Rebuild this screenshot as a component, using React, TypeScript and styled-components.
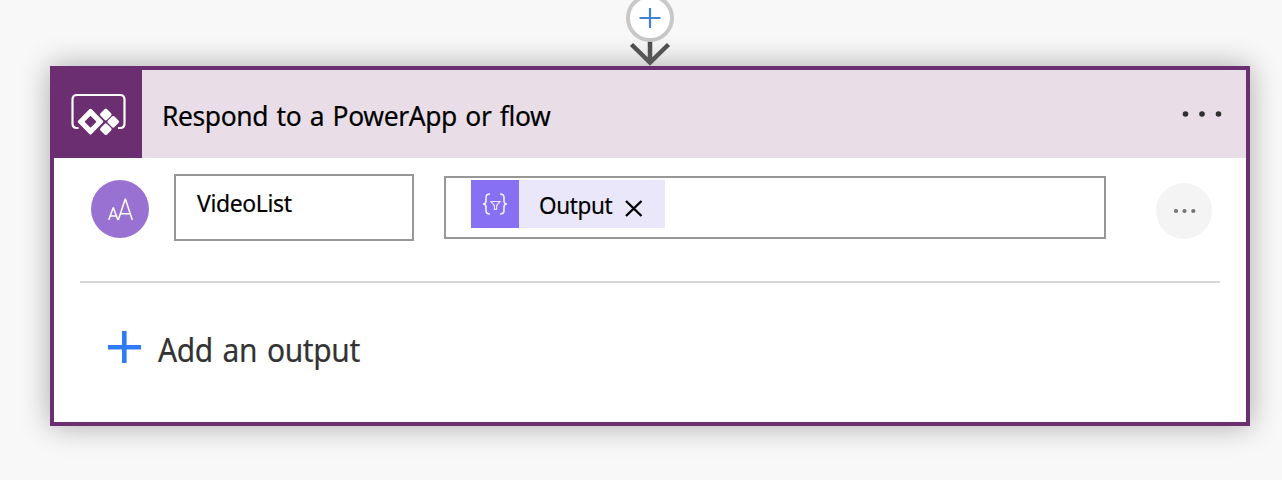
import React from "react";
import styled, { createGlobalStyle } from "styled-components";

const GlobalStyle = createGlobalStyle`
  * { box-sizing: border-box; }
  body { margin: 0; background: #f8f8f8; overflow: hidden; }
`;

const Page = styled.main`
  width: 1282px;
  height: 480px;
  padding: 0 32px 0 50px;
  overflow: hidden;
  background: #f8f8f8;
  font-family: "Noto Sans", "Open Sans", sans-serif;
`;

const Connector = styled.div`
  display: flex;
  justify-content: center;
  height: 66px;
  svg { display: block; }
`;

const Card = styled.section`
  position: relative;
  height: 360px;
  border: 4px solid #6b2e70;
  background: #fff;
  box-shadow: 0 0 28px rgba(0, 0, 0, 0.32);
`;

const Header = styled.header`
  display: flex;
  align-items: center;
  height: 88px;
  padding-right: 22px;
  background: #e9dee8;
`;

const Logo = styled.div`
  width: 88px;
  height: 88px;
  flex: none;
  background: #6b2e70;
  svg { display: block; }
`;

const Label = styled.span<{ $size: number; $condense: number; $gap?: number; $color?: string }>`
  display: inline-block;
  font-size: ${(p) => p.$size}px;
  letter-spacing: -0.4px;
  word-spacing: ${(p) => p.$gap ?? 0}px;
  color: ${(p) => p.$color ?? "#000"};
  -webkit-text-stroke: 0.2px;
  line-height: 36px;
  white-space: pre;
  transform: scaleX(${(p) => p.$condense});
  transform-origin: left;
`;

const Title = styled.h1`
  flex: 1;
  margin: 14px 0 0 20px;
  font-weight: 400;
  line-height: 36px;
  font-size: 0;
`;

const PlainButton = styled.button`
  padding: 0;
  border: 0;
  background: none;
  font: inherit;
  svg { display: block; }
`;

const OutputRow = styled.div`
  display: flex;
  align-items: flex-start;
  height: 123px;
  margin: 0 26px;
  padding: 16px 8px 0 11px;
`;

const TypeBadge = styled.div`
  width: 58px;
  height: 58px;
  margin-top: 6px;
  border-radius: 50%;
  background: #9971d3;
  svg { display: block; }
`;

const NameField = styled.div`
  width: 240px;
  height: 67px;
  margin-left: 25px;
  padding: 9px 0 0 21px;
  border: 2px solid #979797;
`;

const ValueField = styled.div`
  width: 662px;
  height: 63px;
  margin: 2px 0 0 30px;
  padding: 2px 0 0 25px;
  border: 2px solid #979797;
`;

const Token = styled.div`
  display: flex;
  align-items: center;
  width: 194px;
  height: 48px;
  background: #ebe7fb;
  svg { display: block; flex: none; }
`;

const TokenName = styled.div`
  width: 85px;
  margin: 10px 0 0 20px;
  line-height: 36px;
  font-size: 0;
`;

const RemoveButton = styled(PlainButton)`
  margin-top: 7px;
`;

const RoundButton = styled(PlainButton)`
  width: 56px;
  height: 56px;
  margin: 9px 0 0 50px;
  border-radius: 50%;
  background: #f4f4f4;
`;

const Divider = styled.hr`
  height: 2px;
  margin: 0 26px;
  border: 0;
  background: #d6d6d6;
`;

const AddButton = styled(PlainButton)`
  display: flex;
  align-items: flex-start;
  margin: 47px 0 0 54px;
`;

const AddLabel = styled.span`
  margin: 1px 0 0 16px;
  font-size: 0;
`;

function Dots({ width, height, xs, cy, r, color }: {
  width: number; height: number; xs: number[]; cy: number; r: number; color: string;
}) {
  return (
    <svg width={width} height={height} fill={color}>
      {xs.map((x) => <circle key={x} cx={x} cy={cy} r={r} />)}
    </svg>
  );
}

function InsertArrow() {
  return (
    <svg width="60" height="66" viewBox="0 0 60 66" fill="none">
      <defs>
        <linearGradient id="stem" x1="0" y1="42" x2="0" y2="66" gradientUnits="userSpaceOnUse">
          <stop stopColor="#4c4c4c" />
          <stop offset="1" stopColor="#6a6a6a" />
        </linearGradient>
      </defs>
      <path d="M30 40v22M11.500 44.500 30 62.500l18.500-18" stroke="url(#stem)" strokeWidth="4.500" />
      <circle cx="30" cy="18" r="22" fill="#fff" stroke="#c8c8c8" strokeWidth="4" />
      <path d="M30 8v20M19.500 18h21" stroke="#3f83d2" strokeWidth="2.200" />
    </svg>
  );
}

function PowerAppsIcon() {
  return (
    <svg width="88" height="88" viewBox="54 70 88 88" fill="none">
      <path d="M78.500 128H77q-4.500 0-4.500-4.500V99.500q0-4.500 4.500-4.500h43q4.500 0 4.500 4.500v24q0 4.500-4.500 4.500h-2" stroke="#fff" strokeWidth="2.200" />
      <g fill="#fff" stroke="#fff" strokeLinejoin="round">
        <path d="m90.500 110 11.500 11.700-11.500 11.700L79 121.700z" strokeWidth="2.500" />
        <path d="m105.800 110.500 4 4-4 4-4-4zM113.200 117.800l4 4-4 4-4-4zM105.800 125.200l4 4-4 4-4-4z" strokeWidth="3.600" />
      </g>
      <path d="m90.500 116.800 5 4.900-5 4.900-5-4.900z" fill="#6b2e70" stroke="#6b2e70" strokeLinejoin="round" strokeWidth="1.500" />
    </svg>
  );
}

function TextTypeIcon() {
  return (
    <svg width="58" height="58" viewBox="91 180 58 58" fill="none" stroke="#fff" strokeWidth="1.500" strokeLinejoin="bevel">
      <path d="m108.700 220 4.600-12.500 4.600 12.500M110.300 216h6M118.300 220l7-21.200 7 21.200M120.500 213.700h9.600" />
    </svg>
  );
}

function FilterIcon() {
  return (
    <svg width="48" height="48" viewBox="471 180 48 48" fill="none">
      <path d="M471 180h48v48h-48z" fill="#8870f5" />
      <path d="M490 194q-4 0-4 3.500v3.500q0 3-3 3 3 0 3 3v3.500q0 3.500 4 3.500M500 194q4 0 4 3.500v3.500q0 3 3 3-3 0-3 3v3.500q0 3.500-4 3.500" stroke="#f2efff" strokeWidth="1.600" />
      <path d="M491 201.500h9l-3.400 4v3.800h-2.200v-3.800z" stroke="#e8e2ff" strokeWidth="1.200" />
    </svg>
  );
}

export default function App() {
  return (
    <>
      <GlobalStyle />
      <Page>
        <Connector><InsertArrow /></Connector>
        <Card>
          <Header>
            <Logo><PowerAppsIcon /></Logo>
            <Title><Label $size={27.5} $condense={0.961} $gap={2}>Respond to a PowerApp or flow</Label></Title>
            <PlainButton aria-label="Menu">
              <Dots width={44} height={12} xs={[5.5, 22, 38.5]} cy={6} r={2.8} color="#303030" />
            </PlainButton>
          </Header>
          <OutputRow>
            <TypeBadge><TextTypeIcon /></TypeBadge>
            <NameField><Label $size={24.2} $condense={0.95}>VideoList</Label></NameField>
            <ValueField>
              <Token>
                <FilterIcon />
                <TokenName><Label $size={24.2} $condense={0.93}>Output</Label></TokenName>
                <RemoveButton aria-label="Remove">
                  <svg width="20" height="20" viewBox="0 0 20 20">
                    <path d="m2 3 15.500 15M17.500 3 2 18" stroke="#000" strokeWidth="2.400" />
                  </svg>
                </RemoveButton>
              </Token>
            </ValueField>
            <RoundButton aria-label="Output options">
              <Dots width={56} height={56} xs={[20, 28.5, 37.3]} cy={28} r={2.1} color="#747474" />
            </RoundButton>
          </OutputRow>
          <Divider />
          <AddButton>
            <svg width="34" height="34" viewBox="0 0 34 34">
              <path d="M16.300 1v32M0 17.200h33" stroke="#2f7bf6" strokeWidth="4.600" />
            </svg>
            <AddLabel><Label $size={32.4} $condense={0.925} $gap={2.5} $color="#333">Add an output</Label></AddLabel>
          </AddButton>
        </Card>
      </Page>
    </>
  );
}
